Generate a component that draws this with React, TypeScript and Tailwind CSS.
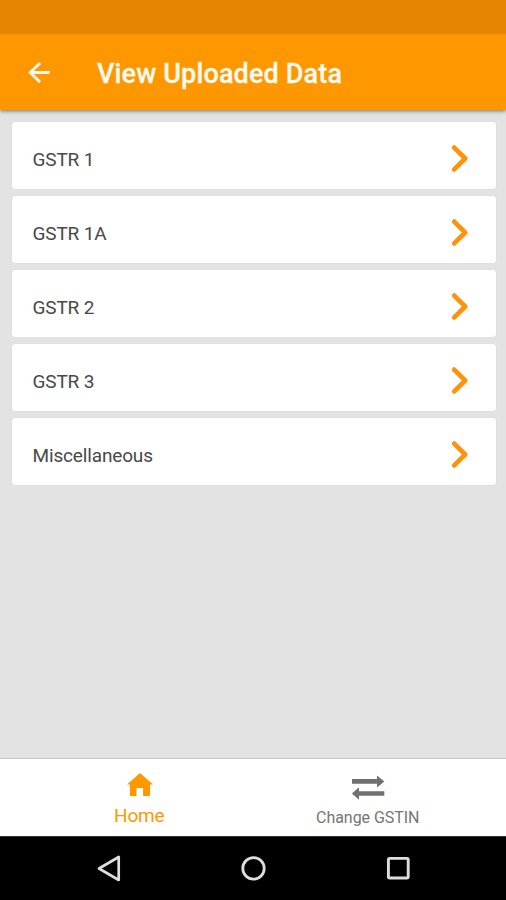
const rows = ['GSTR 1', 'GSTR 1A', 'GSTR 2', 'GSTR 3', 'Miscellaneous'];

function Chevron() {
  return (
    <svg width="20" height="30" viewBox="0 0 20 30" fill="none" className="shrink-0">
      <path d="M4.2 3.6 15.2 14.5 4.2 25.4" stroke="#fb930d" strokeWidth="4.7" strokeLinecap="round" strokeLinejoin="round" />
    </svg>
  );
}

export default function App() {
  return (
    <div className="flex h-[900px] w-[506px] flex-col overflow-hidden bg-[#e3e3e3] font-['Roboto',sans-serif]">
      <div className="z-10 h-[34px] shrink-0 bg-[#e68600]" />
      <header className="z-10 flex h-[76px] shrink-0 items-center border-t border-[#f28f00] bg-[#ff9700] pl-[28px] [clip-path:inset(0_0_-8px_0)] shadow-[0_1px_4px_rgba(0,0,0,0.5)]">
        <svg width="22" height="22" viewBox="0 0 22 22" fill="none" stroke="#fff8ec" strokeWidth="2.9">
          <path d="M21.8 10.5H2.3M12.1 .9 2.3 10.5l9.8 9.6" />
        </svg>
        <h1 className="ml-[47px] mt-[3px] whitespace-nowrap text-[27px] font-medium leading-8 tracking-[0.15px] text-[#fffaf0] [-webkit-text-stroke:0.3px_#fffaf0]">
          View Uploaded Data
        </h1>
      </header>
      <main className="flex flex-1 flex-col gap-[6.5px] pl-[11.5px] pr-[10px] pt-[11.5px]">
        {rows.map((label) => (
          <button
            key={label}
            className="flex h-[67.5px] shrink-0 items-center justify-between rounded-[3px] bg-white pl-[21px] pr-[26px] pt-[7px] text-left shadow-[0_0_1px_rgba(0,0,0,0.12)]"
          >
            <span className="mt-[2px] text-[19px] leading-6 tracking-[-0.15px] text-[#484848]">{label}</span>
            <Chevron />
          </button>
        ))}
      </main>
      <nav className="flex h-[78px] shrink-0 border-t border-[#c6c6c6] bg-white pl-[25px] pr-[24px]">
        <div className="flex flex-1 flex-col items-center pt-[14px]">
          <svg width="26" height="24" viewBox="0 0 26 24" fill="#ff9700" className="ml-[1px]">
            <path d="M13 0 0 11.5h2.8v10.5q0 1 1 1h5.7v-8h6.6v8h5.9q1 0 1-1V11.5H26Z" />
          </svg>
          <span className="mt-[9px] text-[19px] leading-5 tracking-[-0.15px] text-[#ff9700]">Home</span>
        </div>
        <div className="flex flex-1 flex-col items-center pt-[16px]">
          <svg width="34" height="25" viewBox="0 0 34 25" fill="#707070">
            <path d="M1 4.1h25V.4l7.3 6.1L26 12.6V8.7H1ZM33.3 20.8H8v3.9L.9 18.4 8 12.3v3.9h25.3Z" />
          </svg>
          <span className="mt-[8px] whitespace-nowrap text-[16px] leading-5 tracking-[-0.05px] text-[#757575]">Change GSTIN</span>
        </div>
      </nav>
      <footer className="flex h-[64px] shrink-0 items-center justify-between border-t border-[#333333] bg-black pl-[96px] pr-[95px]">
        <svg width="26" height="28" viewBox="0 0 26 28" fill="none" stroke="#dedede" strokeWidth="2.7" strokeLinejoin="round">
          <path d="M22.7 2v23L3 13.5Z" />
        </svg>
        <svg width="26" height="26" viewBox="0 0 26 26" fill="none" stroke="#dedede" strokeWidth="2.8">
          <circle cx="12.5" cy="12.4" r="10.7" />
        </svg>
        <svg width="26" height="26" viewBox="0 0 26 26" fill="none" stroke="#dedede" strokeWidth="2.9">
          <rect x="3.4" y="2.4" width="19.8" height="19.6" rx="1.3" />
        </svg>
      </footer>
    </div>
  );
}
